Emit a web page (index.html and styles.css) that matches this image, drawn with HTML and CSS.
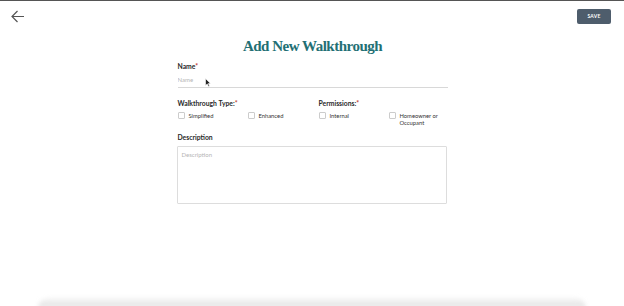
FILE: index.html
```html
<!DOCTYPE html>
<html>
<head>
    <title>Add New Walkthrough</title>
    <link rel="stylesheet" href="styles.css">
</head>
<body>
    <div class="topbar">
        <a class="back" href="#">
            <svg width="14" height="13" viewBox="0 0 14 13">
                <path d="M13 6.5H1.5M6.5 1L1 6.5L6.5 12" fill="none" stroke="#555" stroke-width="1.2"/>
            </svg>
        </a>
        <button type="button" class="save">SAVE</button>
    </div>

    <form class="walkthrough">
        <h1>Add New Walkthrough</h1>

        <label class="field-label" for="name">Name<span class="req">*</span></label>
        <input type="text" id="name" class="line-input" placeholder="Name">

        <div class="options">
            <div class="group">
                <div class="field-label">Walkthrough Type:<span class="req">*</span></div>
                <div class="choices">
                    <label class="choice"><input type="checkbox"><span>Simplified</span></label>
                    <label class="choice"><input type="checkbox"><span>Enhanced</span></label>
                </div>
            </div>
            <div class="group">
                <div class="field-label">Permissions:<span class="req">*</span></div>
                <div class="choices">
                    <label class="choice"><input type="checkbox"><span>Internal</span></label>
                    <label class="choice"><input type="checkbox"><span>Homeowner or<br>Occupant</span></label>
                </div>
            </div>
        </div>

        <label class="field-label" for="description">Description</label>
        <textarea id="description" placeholder="Description"></textarea>
    </form>

    <div class="sheet"></div>

    <svg class="cursor" width="6" height="9" viewBox="0 0 6 9">
        <path d="M0.5 0.5V7.5L2.2 6L3.5 8.5L4.5 8L3.3 5.6H5.5Z" fill="#222" stroke="#fff" stroke-width="0.6"/>
    </svg>
</body>
</html>
```

FILE: styles.css
```css
body {
    margin: 0;
    height: 306px;
    box-sizing: border-box;
    overflow: hidden;
    background: #fff;
    font-family: Lato, "Open Sans", sans-serif;
    color: #222;
    border-top: 1px solid #555;
    position: relative;
}

.topbar {
    display: flex;
    justify-content: space-between;
    align-items: center;
    padding: 7px 13px 0 11px;
    height: 16px;
}

.back {
    display: flex;
    margin-top: 1px;
}

.save {
    width: 34px;
    height: 15px;
    padding: 0;
    border: none;
    border-radius: 2px;
    background-color: #4e5d6c;
    color: #fff;
    font-family: Lato, sans-serif;
    font-size: 5px;
    font-weight: 700;
    letter-spacing: 0.2px;
}

.walkthrough {
    width: 270px;
    margin: 0 auto;
    padding-left: 1px;
}

h1 {
    margin: 13px 0 7px;
    text-align: center;
    font-family: "Liberation Serif", serif;
    font-size: 15px;
    font-weight: 700;
    letter-spacing: -0.5px;
    color: #226f74;
    line-height: 18px;
}

.field-label {
    display: block;
    font-size: 6.8px;
    font-weight: 700;
    color: #2a2a2a;
    line-height: 9px;
}

.req {
    color: #c0392b;
}

.line-input {
    display: block;
    width: 100%;
    box-sizing: border-box;
    margin: 3px 0 0;
    padding: 2px 0 4px;
    border: none;
    border-bottom: 1px solid #d8d8d8;
    font-family: Lato, sans-serif;
    font-size: 6px;
    outline: none;
}

.line-input::placeholder,
textarea::placeholder {
    color: #b5b5b5;
}

.options {
    display: grid;
    grid-template-columns: 141px 141px;
    margin-top: 11px;
}

.choices {
    display: grid;
    grid-template-columns: 70px 71px;
    margin-top: 4px;
}

.choice {
    display: flex;
    align-items: flex-start;
    font-size: 5.8px;
    line-height: 7px;
    color: #333;
}

.choice input {
    appearance: none;
    width: 7px;
    height: 7px;
    margin: 0 4px 0 0;
    border: 1px solid #ccc;
    border-radius: 1px;
    box-sizing: border-box;
}

.options + .field-label {
    margin-top: 7px;
}

textarea {
    display: block;
    width: 270px;
    height: 58px;
    box-sizing: border-box;
    margin: 4px 0 0 -1px;
    padding: 4px;
    border: 1px solid #ddd;
    border-radius: 1px;
    font-family: Lato, sans-serif;
    font-size: 6px;
    resize: none;
}

.sheet {
    width: 548px;
    height: 10px;
    margin: 94px auto 0;
    border-radius: 18px 18px 0 0;
    background: linear-gradient(to bottom, #f6f6f6, #e2e2e2);
    filter: blur(2px);
}

.cursor {
    position: absolute;
    left: 205px;
    top: 77px;
}
```
